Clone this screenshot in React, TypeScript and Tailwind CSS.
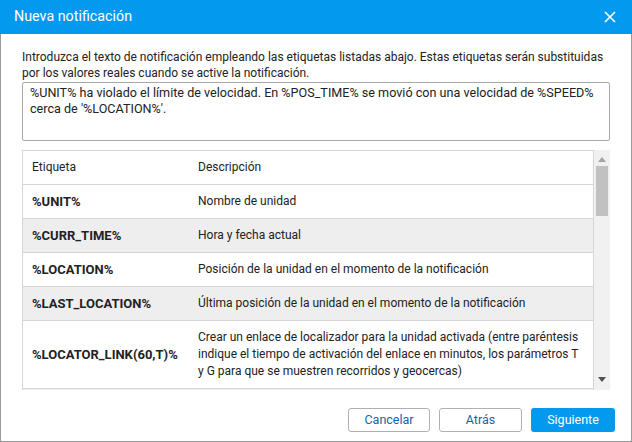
import React from "react";

const rows = [
	{ tag: "%UNIT%", desc: "Nombre de unidad" },
	{ tag: "%CURR_TIME%", desc: "Hora y fecha actual" },
	{ tag: "%LOCATION%", desc: "Posición de la unidad en el momento de la notificación" },
	{ tag: "%LAST_LOCATION%", desc: "Última posición de la unidad en el momento de la notificación" },
	{
		tag: "%LOCATOR_LINK(60,T)%",
		desc: "Crear un enlace de localizador para la unidad activada (entre paréntesis indique el tiempo de activación del enlace en minutos, los parámetros T y G para que se muestren recorridos y geocercas)",
	},
];

export default function App() {
	return (
		<div className="w-[632px] h-[442px] bg-white border border-[#9a9a9a] flex flex-col font-['Roboto',Arial,sans-serif] text-[#222]">
			{/* Header */}
			<div className="h-[34px] shrink-0 bg-[#0399ef] flex items-center justify-between pl-[14px] pr-[16px] -mx-px -mt-px">
				<span className="text-white text-[14.3px]">Nueva notificación</span>
				<svg width="12" height="12" viewBox="0 0 12 12" className="text-white">
					<path d="M1 1 L11 11 M11 1 L1 11" stroke="currentColor" strokeWidth="1.6" />
				</svg>
			</div>

			{/* Body */}
			<div className="flex-1 flex flex-col px-[21px] pt-[15px]">
				<p className="text-[12px] leading-[16px]">
					Introduzca el texto de notificación empleando las etiquetas listadas abajo. Estas etiquetas serán substituidas por los valores reales cuando se active la notificación.
				</p>
				<div className="mt-[1px] h-[59px] border border-[#a9a9a9] rounded-[2px] px-[7px] pt-[2px] text-[12.6px] leading-[16px]">
					%UNIT% ha violado el límite de velocidad. En %POS_TIME% se movió con una velocidad de %SPEED% cerca de '%LOCATION%'.
				</div>

				<div className="mt-[9px] h-[240px] flex overflow-hidden">
					<div className="flex-1 border-l border-t border-r border-[#d6d6d6] text-[12px] leading-[17px]">
						<div className="flex h-[34px] items-center border-b border-[#d6d6d6]">
							<div className="w-[166px] pl-[9px]">Etiqueta</div>
							<div className="flex-1 pl-[9px]">Descripción</div>
						</div>
						{rows.map((r, i) => (
							<div
								key={r.tag}
								className={`flex items-center border-b border-[#d6d6d6] py-[8px] ${i % 2 === 1 ? "bg-[#eeeeee]" : "bg-white"}`}
							>
								<div className="w-[166px] pl-[9px] font-bold text-[13px]">{r.tag}</div>
								<div className="flex-1 pl-[9px] pr-[12px]">{r.desc}</div>
							</div>
						))}
						<div className="h-[34px] bg-[#eeeeee]" />
					</div>
					{/* Scrollbar */}
					<div className="w-[16px] bg-[#f1f1f1] flex flex-col items-center">
						<svg width="8" height="5" viewBox="0 0 8 5" className="mt-[7px]">
							<path d="M0 5 L4 0 L8 5 Z" fill="#a3a3a3" />
						</svg>
						<div className="mt-[4px] w-[12px] h-[50px] bg-[#c1c1c1]" />
						<div className="flex-1" />
						<svg width="8" height="5" viewBox="0 0 8 5" className="mb-[8px]">
							<path d="M0 0 L8 0 L4 5 Z" fill="#505050" />
						</svg>
					</div>
				</div>

				{/* Footer */}
				<div className="flex justify-end gap-[9px] pt-[18px] mr-[-5px]">
					<button className="w-[82px] h-[24px] border border-[#b0b0b0] rounded-[3px] bg-white text-[#1a5fa8] text-[12.5px]">
						Cancelar
					</button>
					<button className="w-[83px] h-[24px] border border-[#b0b0b0] rounded-[3px] bg-white text-[#1a5fa8] text-[12.5px]">
						Atrás
					</button>
					<button className="w-[84px] h-[24px] rounded-[3px] bg-[#0399ef] text-white text-[12.5px]">
						Siguiente
					</button>
				</div>
			</div>
		</div>
	);
}
